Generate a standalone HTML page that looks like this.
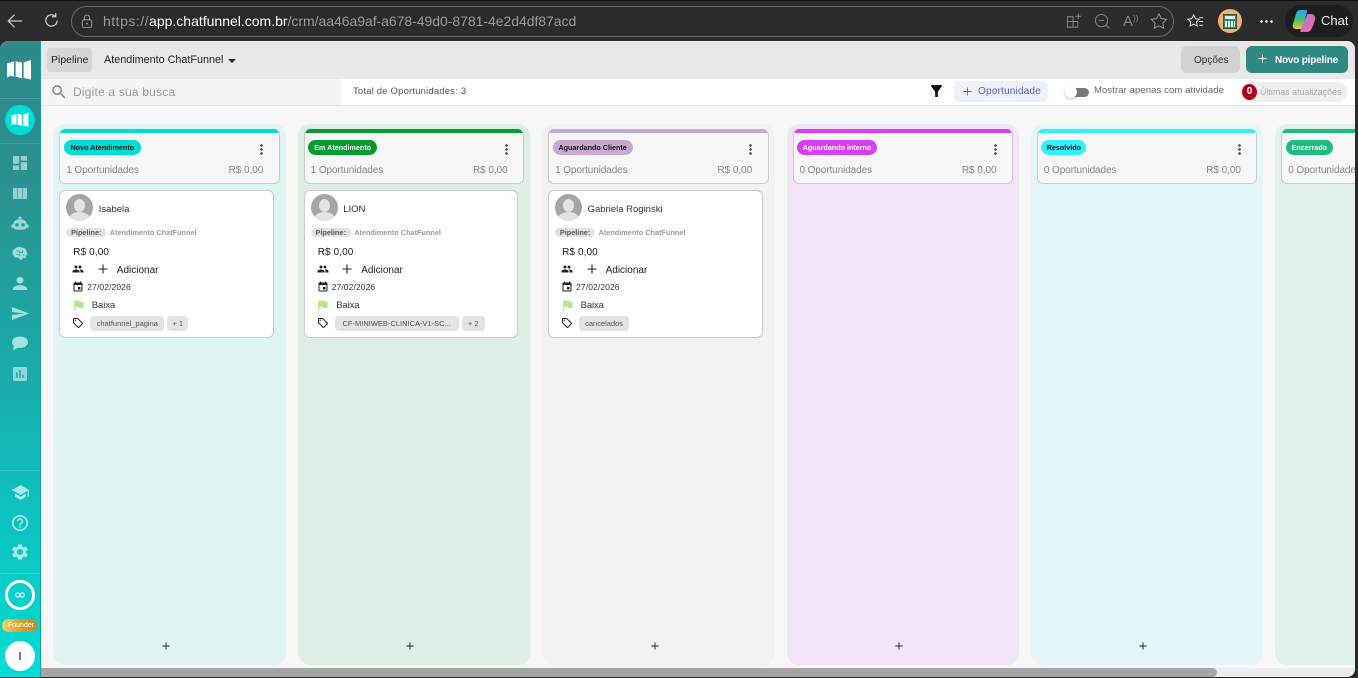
<!DOCTYPE html>
<html lang="pt-BR"><head><meta charset="utf-8"><title>Pipeline</title>
<style>
*{box-sizing:border-box}
html,body{margin:0;padding:0;width:1358px;height:678px;overflow:hidden;background:#2b2b2b;font-family:"Liberation Sans",sans-serif;color:#222}
.a{position:absolute}
.t{position:absolute;white-space:nowrap;line-height:1}
svg{position:absolute;display:block}
#page{position:absolute;left:0;top:41px;width:1355px;height:636px;background:#f6f6f6;border-radius:8px 8px 8px 0;overflow:hidden}
.col{position:absolute;top:83px;width:232.500px;height:541px;border-radius:12px}
.hd{position:absolute;left:6px;top:5px;width:220.500px;height:55px;background:#f6f6f6;border:1px solid #ccc;border-top:0;border-radius:6px;overflow:hidden}
.bar{position:absolute;left:0;top:0;right:0;height:4px}
.pill{position:absolute;left:3.500px;top:11px;height:15px;border-radius:7.500px;font-size:7.200px;font-weight:bold;line-height:15px;text-align:center;white-space:nowrap;color:#111}
.opp{position:absolute;left:6px;top:36px;font-size:10px;line-height:12px;color:#888;white-space:nowrap;letter-spacing:-.1px}
.val{position:absolute;right:15.500px;top:36px;font-size:10px;line-height:12px;color:#888;white-space:nowrap;letter-spacing:-.05px}
.dots{position:absolute;left:200px;top:15px;width:3px;height:11px;background:radial-gradient(circle at 1.500px 1.500px,#666 1.300px,transparent 1.500px) 0 0/3px 4px}
.card{position:absolute;left:6px;top:66px;width:214.600px;height:148px;background:#fff;border:1px solid #ccc;border-radius:6px}
.av{position:absolute;left:6px;top:3px;width:27px;height:27px;border-radius:50%;background:#a5a5a5;overflow:hidden}
.av:before{content:"";position:absolute;left:8px;top:5px;width:11px;height:13px;border-radius:50%;background:#e3e3e3}
.av:after{content:"";position:absolute;left:3px;top:18px;width:21px;height:14px;border-radius:50%;background:#e3e3e3}
.name{position:absolute;left:38.500px;top:13px;font-size:9.500px;line-height:12px;color:#333;white-space:nowrap}
.pl{position:absolute;left:6px;top:37px;width:40px;height:9px;border-radius:5px;background:#e3e3e3;font-size:7.300px;line-height:9px;text-align:center;color:#555;font-weight:bold}
.pn{position:absolute;left:49.500px;top:37px;font-size:7.300px;line-height:9px;color:#999;white-space:nowrap;font-weight:bold}
.money{position:absolute;left:13px;top:56px;font-size:10px;line-height:12px;color:#222;letter-spacing:.1px;white-space:nowrap}
.add{position:absolute;left:56.500px;top:74px;font-size:10px;line-height:12px;color:#222}
.dt{position:absolute;left:27px;top:91px;font-size:8.500px;line-height:10px;color:#333;letter-spacing:.1px}
.lo{position:absolute;left:31.500px;top:109px;font-size:9.500px;line-height:12px;color:#333;letter-spacing:-.1px}
.chip{position:absolute;top:125px;height:15px;border-radius:4px;background:#e4e4e4;font-size:7.500px;line-height:15px;text-align:center;color:#555;white-space:nowrap;overflow:hidden}
.pls{position:absolute;left:108.500px;top:518px}
</style></head><body>
<svg width="0" height="0" style="position:absolute"><defs>
<symbol id="map" viewBox="0 0 24 20"><path d="M0 3.500 7 1.300V16.800L3.500 15.800 0 17.500ZM8.600 1.200 15 2.600V18.200L8.600 16.700ZM16.600 2.400 24 0V19.500L16.600 18Z" fill="currentColor"/></symbol>
<symbol id="people" viewBox="0 0 24 24"><path d="M16 11c1.660 0 2.990-1.340 2.990-3S17.660 5 16 5c-1.660 0-3 1.340-3 3s1.340 3 3 3zm-8 0c1.660 0 2.990-1.340 2.990-3S9.660 5 8 5C6.340 5 5 6.340 5 8s1.340 3 3 3zm0 2c-2.330 0-7 1.170-7 3.500V19h14v-2.500c0-2.330-4.670-3.500-7-3.500zm8 0c-.29 0-.62.02-.97.05 1.160.84 1.970 1.970 1.970 3.450V19h6v-2.500c0-2.330-4.670-3.500-7-3.500z" fill="#222"/></symbol>
<symbol id="event" viewBox="0 0 24 24"><path d="M17 12h-5v5h5v-5zM16 1v2H8V1H6v2H5c-1.110 0-1.990.9-1.990 2L3 19c0 1.100.89 2 2 2h14c1.100 0 2-.9 2-2V5c0-1.100-.9-2-2-2h-1V1h-2zm3 18H5V8h14v11z" fill="#222"/></symbol>
<symbol id="flag" viewBox="0 0 24 24"><path d="M14.400 6L14 4H5v17h2v-7h5.600l.4 2h7V6z" fill="#b3e88c"/></symbol>
<symbol id="tag" viewBox="0 0 24 24"><path d="M21.410 11.580l-9-9C12.050 2.220 11.550 2 11 2H4c-1.100 0-2 .9-2 2v7c0 .55.22 1.050.59 1.420l9 9c.36.36.86.58 1.410.58s1.050-.22 1.410-.59l7-7c.37-.36.59-.86.59-1.410s-.23-1.060-.59-1.420zM13 20.010L4 11V4h7v-.01l9 9-7 7.020z" fill="#222"/><circle cx="6.500" cy="6.500" r="1.500" fill="#222"/></symbol>
<symbol id="plus" viewBox="0 0 10 10"><path d="M5 .5v9M.5 5h9" stroke="#222" stroke-width="1.100" fill="none"/></symbol>
</defs></svg>

<!-- browser chrome -->
<div class="a" style="left:0;top:0;width:1358px;height:1px;background:#111"></div>
<svg style="left:6px;top:12px" width="18" height="18" viewBox="0 0 20 20"><path d="M18 10H2.500M9.500 3 2.500 10l7 7" stroke="#ccc" stroke-width="1.300" fill="none"/></svg>
<svg style="left:43px;top:12px" width="17" height="17" viewBox="0 0 18 18"><path d="M15 9a6 6 0 1 1-2-4.500M13.500 1v4h-4" stroke="#ccc" stroke-width="1.300" fill="none"/></svg>
<div class="a" style="left:71px;top:6px;width:1103px;height:31px;border:1px solid #666;border-radius:15.500px"></div>
<svg style="left:81px;top:14px" width="12" height="15" viewBox="0 0 14 17"><path d="M4 7V4a3 3 0 0 1 6 0v3" stroke="#aaa" fill="none"/><rect x="1.500" y="6.500" width="11" height="9" rx="2" stroke="#aaa" fill="none"/><circle cx="7" cy="11" r="1" fill="#aaa"/></svg>
<div class="t" style="left:103px;top:14px;font-size:14px;color:#9a9a9a"><span style="letter-spacing:.5px">https://</span><span style="color:#fff">app.chatfunnel.com.br</span><span style="letter-spacing:-.04px">/crm/aa46a9af-a678-49d0-8781-4e2d4df87acd</span></div>
<svg style="left:1066px;top:12px" width="17" height="18" viewBox="0 0 18 18"><path d="M1.500 4.500h6v5h5v6h-11zM1.500 9.500h6v6M13 1v6M10 4h6" stroke="#888" fill="none"/></svg>
<svg style="left:1094px;top:13px" width="17" height="17" viewBox="0 0 18 18"><circle cx="8" cy="8" r="6.500" stroke="#888" fill="none"/><path d="M5.500 8h5M12.500 12.500l4 4" stroke="#888" fill="none"/></svg>
<div class="t" style="left:1123px;top:14px;font-size:15px;color:#888">A<span style="font-size:8px;position:relative;top:-5px">))</span></div>
<svg style="left:1150px;top:12px" width="18" height="18" viewBox="0 0 19 19"><path d="M9.500 2 12 7l5.500.8-4 3.900 1 5.500-5-2.600-5 2.600 1-5.500-4-3.900L7 7z" stroke="#999" fill="none"/></svg>
<svg style="left:1186px;top:12px" width="19" height="19" viewBox="0 0 20 20"><path d="M8 3 10 7l4 .6-3 2.900.8 4.300L8 12.800 4.300 14.800 5 10.500 2 7.600 6 7z" stroke="#eee" fill="none"/><path d="M14 6h4M14 10h4M14 14h4" stroke="#eee"/></svg>
<div class="a" style="left:1218px;top:9px;width:24px;height:24px;border-radius:50%;background:#f5b06b"></div>
<div class="a" style="left:1223px;top:14px;width:14px;height:15px;background:#2e8b70;border:1px solid #1c5c4a"></div>
<div class="a" style="left:1225px;top:16px;width:10px;height:3px;background:#dff5ee"></div>
<div class="a" style="left:1225px;top:21px;width:10px;height:6px;background:repeating-linear-gradient(90deg,#e8fff6 0 2px,#2e8b70 2px 3px)"></div>
<div class="a" style="left:1260px;top:20px;width:14px;height:3px;background:radial-gradient(circle at 1.500px 1.500px,#ddd 1.200px,transparent 1.500px) 0 0/5px 3px"></div>
<div class="a" style="left:1285px;top:5px;width:68px;height:32px;border-radius:16px;background:#1d1d1d"></div>
<svg style="left:1292px;top:9px" width="24" height="24" viewBox="0 0 24 24"><defs><linearGradient id="g1" x1="0" y1="0" x2="0" y2="1"><stop offset="0" stop-color="#2aa3f0"/><stop offset=".5" stop-color="#36c46e"/><stop offset="1" stop-color="#f5c32c"/></linearGradient><linearGradient id="g2" x1="0" y1="0" x2="1" y2="1"><stop offset="0" stop-color="#b06cf0"/><stop offset="1" stop-color="#f0708a"/></linearGradient></defs><path d="M8 1h6c1 0 1.500 1 1 2L11 17c-.5 2-1.500 3-3 3H4c-3 0-4-3-3-5L4 5c.7-2.500 2-4 4-4z" fill="url(#g1)"/><path d="M16 5h3c3 0 5 3 4 6l-3 8c-.7 2-2.500 4-4.500 4H9c-1 0-1-1-.5-2L15 6c.2-.6.5-1 1-1z" fill="url(#g2)"/></svg>
<div class="t" style="left:1321px;top:14px;font-size:13px;color:#eee">Chat</div>

<div id="page">
<!-- sidebar -->
<div class="a" style="left:0;top:0;width:41px;height:636px;background:linear-gradient(180deg,#2f8a8a 0%,#2b9090 20%,#1ba9a9 50%,#00dcd6 100%);border-right:1px solid #12a5a0"></div>
<svg style="left:7px;top:19px;color:#fff" width="24" height="20"><use href="#map"/></svg>
<div class="a" style="left:0;top:57px;width:40px;height:1px;background:#ffffff26"></div>
<div class="a" style="left:5px;top:64px;width:30px;height:30px;border-radius:50%;background:#00dcd6"></div>
<svg style="left:11px;top:72px;color:#fff" width="18" height="14"><use href="#map"/></svg>
<div class="a" style="left:0;top:102px;width:40px;height:1px;background:#ffffff1f"></div>
<svg style="left:13px;top:115px" width="14" height="14" viewBox="3 3 18 18" fill="#93cfcc"><path d="M3 13h8V3H3v10zm0 8h8v-6H3v6zm10 0h8V11h-8v10zm0-18v6h8V3h-8z"/></svg>
<svg style="left:13px;top:147px" width="14" height="11" viewBox="0 0 14 11" fill="#93d2cf"><path d="M0 0h4.300v11H0zM4.900 0h4.200v11H4.900zM9.700 0H14v11H9.700z"/></svg>
<svg style="left:11px;top:175px" width="18" height="16" viewBox="0 0 18 18" fill="#9ad8d5" preserveAspectRatio="none"><circle cx="9" cy="2" r="1.500"/><path d="M9 3.500c4 0 6.500 2.500 6.500 5.500l1.500.5c1 .5 1 3 0 3.500l-1.500.5c-1 1.500-2 2-3.500 2H6c-1.500 0-2.500-.5-3.500-2L1 13c-1-.5-1-3 0-3.500l1.500-.5c0-3 2.500-5.500 6.500-5.500z"/><circle cx="6" cy="10" r="1.800" fill="#279a9a"/><circle cx="12" cy="10" r="1.800" fill="#279a9a"/></svg>
<svg style="left:12px;top:205px" width="16" height="15" viewBox="0 0 18 18" preserveAspectRatio="none"><path d="M3 3.500C5 1 9 .5 11 2c3 0 5.500 2 5.500 5 1 2 .5 4-1 5v3l-3.500-1-.5 2.500H9L7.500 14c-3 .5-5-.5-5.500-2.500C0 10 0 5.500 3 3.500z" fill="#9ddbd8"/><path d="M5 6h3l1 2h3M5 10h3l1 2M12 5v3M12 11h2" stroke="#22a0a0" fill="none"/></svg>
<svg style="left:13px;top:236px" width="14" height="13" viewBox="4 4 16 16" preserveAspectRatio="none" fill="#a3e0dd"><path d="M12 12c2.210 0 4-1.790 4-4s-1.790-4-4-4-4 1.790-4 4 1.790 4 4 4zm0 2c-2.670 0-8 1.340-8 4v2h16v-2c0-2.660-5.330-4-8-4z"/></svg>
<svg style="left:12px;top:266px" width="17" height="13" viewBox="2 3 21 18" preserveAspectRatio="none" fill="#a3e0dd"><path d="M2.010 21L23 12 2.010 3 2 10l15 2-15 2z"/></svg>
<svg style="left:12px;top:295px" width="16" height="15" viewBox="0 0 16 17" preserveAspectRatio="none" fill="#a3e2df"><ellipse cx="8" cy="7" rx="8" ry="6.500"/><path d="M2 10 1 16l6-3z"/></svg>
<svg style="left:13px;top:326px" width="14" height="14" viewBox="3 3 18 18" fill="#8fd8d5"><path d="M19 3H5c-1.100 0-2 .9-2 2v14c0 1.100.9 2 2 2h14c1.100 0 2-.9 2-2V5c0-1.100-.9-2-2-2zM9 17H7v-7h2v7zm4 0h-2V7h2v10zm4 0h-2v-4h2v4z"/></svg>
<div class="a" style="left:0;top:429px;width:40px;height:1px;background:#ffffff1f"></div>
<svg style="left:12px;top:444px" width="17" height="15" viewBox="1 3 22 18" preserveAspectRatio="none" fill="#a8ece8"><path d="M5 13.180v4L12 21l7-3.820v-4L12 17l-7-3.820zM12 3L1 9l11 6 9-4.910V17h2V9L12 3z"/></svg>
<svg style="left:12px;top:474px" width="16" height="16" viewBox="2 2 20 20" fill="#a8ece8"><path d="M11 18h2v-2h-2v2zm1-16C6.480 2 2 6.480 2 12s4.480 10 10 10 10-4.480 10-10S17.520 2 12 2zm0 18c-4.410 0-8-3.590-8-8s3.590-8 8-8 8 3.590 8 8-3.590 8-8 8zm0-14c-2.210 0-4 1.790-4 4h2c0-1.100.9-2 2-2s2 .9 2 2c0 2-3 1.750-3 5h2c0-2.250 3-2.500 3-5 0-2.210-1.790-4-4-4z"/></svg>
<svg style="left:12px;top:503px" width="16" height="16" viewBox="2.500 2 19 20" preserveAspectRatio="none" fill="#a8ece8"><path d="M19.140 12.940c.04-.3.06-.61.06-.94 0-.32-.02-.64-.07-.94l2.030-1.580c.18-.14.23-.41.12-.61l-1.920-3.320c-.12-.22-.37-.29-.59-.22l-2.390.96c-.5-.38-1.030-.7-1.620-.94l-.36-2.540c-.04-.24-.24-.41-.48-.41h-3.840c-.24 0-.43.17-.47.41l-.36 2.540c-.59.24-1.130.57-1.620.94l-2.390-.96c-.22-.08-.47 0-.59.22L2.740 8.870c-.12.21-.08.47.12.61l2.030 1.580c-.05.3-.09.63-.09.94s.02.64.07.94l-2.030 1.580c-.18.14-.23.41-.12.61l1.920 3.320c.12.22.37.29.59.22l2.390-.96c.5.38 1.030.7 1.620.94l.36 2.540c.05.24.24.41.48.41h3.840c.24 0 .44-.17.47-.41l.36-2.540c.59-.24 1.130-.56 1.620-.94l2.390.96c.22.08.47 0 .59-.22l1.920-3.320c.12-.22.07-.47-.12-.61l-2.010-1.580zM12 15.600c-1.980 0-3.600-1.620-3.600-3.600s1.620-3.600 3.600-3.600 3.600 1.620 3.600 3.600-1.620 3.600-3.600 3.600z"/></svg>
<div class="a" style="left:0;top:532px;width:40px;height:1px;background:#ffffff2e"></div>
<div class="a" style="left:5px;top:539px;width:30px;height:30px;border-radius:50%;border:3px solid #fff"></div>
<svg style="left:15px;top:551px" width="10" height="6" viewBox="0 0 10 6"><circle cx="2.800" cy="3" r="2.100" stroke="#fff" stroke-width="1.100" fill="none"/><circle cx="7.200" cy="3" r="2.100" stroke="#fff" stroke-width="1.100" fill="none"/></svg>
<div class="a" style="left:2px;top:578px;width:35px;height:13px;border-radius:7px;background:linear-gradient(90deg,#f3d36b,#d9a52c 50%,#c48a20)"></div>
<div class="t" style="left:8px;top:581px;font-size:7px;color:#fff">Founder</div>
<div class="a" style="left:5px;top:600px;width:30px;height:30px;border-radius:50%;background:#fff"></div>
<div class="a" style="left:19px;top:611px;width:2px;height:8px;background:#808080"></div>

<!-- top bar -->
<div class="a" style="left:41px;top:0;width:1317px;height:38px;background:#e8e8e8"></div>
<div class="a" style="left:47px;top:7px;width:45px;height:24px;background:#d6d6d6;border-radius:3px"></div>
<div class="t" style="left:51px;top:14px;font-size:10.500px;color:#222">Pipeline</div>
<div class="t" style="left:104px;top:13.500px;font-size:10.800px;color:#222">Atendimento ChatFunnel</div>
<div class="a" style="left:228px;top:18px;border:4px solid transparent;border-top:4px solid #222;border-bottom:0"></div>
<div class="a" style="left:1181px;top:5px;width:59px;height:27px;background:#d2d2d2;border-radius:6px"></div>
<div class="t" style="left:1194px;top:15px;font-size:10px;color:#333">Opções</div>
<div class="a" style="left:1246px;top:5px;width:102px;height:27px;background:#2f8a84;border-radius:6px"></div>
<svg style="left:1258px;top:13px" width="9" height="9" viewBox="0 0 10 10"><path d="M5 .5v9M.5 5h9" stroke="#fff" stroke-width="1.200"/></svg>
<div class="t" style="left:1275px;top:15px;font-size:10px;color:#fff;font-weight:bold;letter-spacing:-.2px">Novo pipeline</div>

<!-- filter row -->
<div class="a" style="left:41px;top:38px;width:1317px;height:27px;background:#fff;border-bottom:1px solid #e6e6e6"></div>
<div class="a" style="left:41px;top:38px;width:300px;height:26px;background:#f5f5f5"></div>
<svg style="left:50px;top:42px" width="18" height="18" viewBox="0 0 24 24" fill="#888"><path d="M15.500 14h-.79l-.28-.27C15.410 12.590 16 11.110 16 9.500 16 5.910 13.090 3 9.500 3S3 5.910 3 9.500 5.910 16 9.500 16c1.610 0 3.090-.59 4.230-1.570l.27.28v.79l5 4.990L20.490 19l-4.990-5zm-6 0C7.010 14 5 11.990 5 9.500S7.010 5 9.500 5 14 7.010 14 9.500 11.990 14 9.500 14z"/></svg>
<div class="t" style="left:73px;top:45px;font-size:12px;color:#999;letter-spacing:.2px">Digite a sua busca</div>
<div class="t" style="left:353px;top:46px;font-size:9.500px;color:#555;letter-spacing:.18px">Total de Oportunidades: 3</div>
<svg style="left:931px;top:44px" width="11" height="12" viewBox="4 4 16 16" preserveAspectRatio="none" fill="#111"><path d="M4.250 5.610C6.270 8.200 10 13 10 13v6c0 .55.45 1 1 1h2c.55 0 1-.45 1-1v-6s3.720-4.800 5.740-7.390C20.250 4.950 19.780 4 18.950 4H5.040c-.83 0-1.300.95-.79 1.610z"/></svg>
<div class="a" style="left:954px;top:40px;width:94px;height:21px;background:#eef0fb;border-radius:5px"></div>
<svg style="left:963px;top:46px" width="9" height="9" viewBox="0 0 10 10"><path d="M5 .5v9M.5 5h9" stroke="#5c62c4" stroke-width="1"/></svg>
<div class="t" style="left:978px;top:46px;font-size:10.200px;color:#5c62c4;letter-spacing:.1px">Oportunidade</div>
<div class="a" style="left:1068px;top:47px;width:21px;height:9px;border-radius:5px;background:#7a7a7a"></div>
<div class="a" style="left:1065px;top:45px;width:12px;height:12px;border-radius:50%;background:#fff;box-shadow:0 1px 2px #0004"></div>
<div class="t" style="left:1094px;top:45px;font-size:9.500px;color:#666;letter-spacing:.1px">Mostrar apenas com atividade</div>
<div class="a" style="left:1240px;top:41px;width:108px;height:20px;border-radius:10px;background:#f0f0f0"></div>
<div class="a" style="left:1242px;top:43px;width:15px;height:16px;border-radius:50%;background:#b00020;color:#fff;font-size:10px;font-weight:bold;line-height:16px;text-align:center">0</div>
<div class="t" style="left:1260px;top:47px;font-size:8.900px;color:#aaa">Últimas atualizações</div>

<!-- columns -->
<div class="col" style="left:53.300px;background:#dff5f3">
<div class="hd"><div class="bar" style="background:#00dcd6"></div><div class="pill" style="background:#00dcd6;width:77px">Novo Atendimento</div><div class="dots"></div><div class="opp">1 Oportunidades</div><div class="val">R$ 0,00</div></div>
<div class="card"><div class="av"></div><div class="name">Isabela</div><div class="pl">Pipeline:</div><div class="pn">Atendimento ChatFunnel</div><div class="money">R$ 0,00</div>
<svg style="left:12px;top:72px" width="12" height="12"><use href="#people"/></svg><svg style="left:37.500px;top:73px" width="10" height="10"><use href="#plus"/></svg><div class="add">Adicionar</div>
<svg style="left:12px;top:90px" width="12" height="12"><use href="#event"/></svg><div class="dt">27/02/2026</div>
<svg style="left:10.600px;top:106.500px" width="15" height="15"><use href="#flag"/></svg><div class="lo">Baixa</div>
<svg style="left:12px;top:126px" width="12" height="12"><use href="#tag"/></svg><div class="chip" style="left:30px;width:74px">chatfunnel_pagina</div><div class="chip" style="left:107px;width:21px">+ 1</div></div>
<svg class="pls" width="8" height="8"><use href="#plus"/></svg></div>

<div class="col" style="left:297.700px;background:#dfeee4">
<div class="hd"><div class="bar" style="background:#039c2f"></div><div class="pill" style="background:#039c2f;color:#fff;width:69px">Em Atendimento</div><div class="dots"></div><div class="opp">1 Oportunidades</div><div class="val">R$ 0,00</div></div>
<div class="card"><div class="av"></div><div class="name">LION</div><div class="pl">Pipeline:</div><div class="pn">Atendimento ChatFunnel</div><div class="money">R$ 0,00</div>
<svg style="left:12px;top:72px" width="12" height="12"><use href="#people"/></svg><svg style="left:37.500px;top:73px" width="10" height="10"><use href="#plus"/></svg><div class="add">Adicionar</div>
<svg style="left:12px;top:90px" width="12" height="12"><use href="#event"/></svg><div class="dt">27/02/2026</div>
<svg style="left:10.600px;top:106.500px" width="15" height="15"><use href="#flag"/></svg><div class="lo">Baixa</div>
<svg style="left:12px;top:126px" width="12" height="12"><use href="#tag"/></svg><div class="chip" style="left:30px;width:124px">CF-MINIWEB-CLINICA-V1-SC...</div><div class="chip" style="left:157px;width:23px">+ 2</div></div>
<svg class="pls" width="8" height="8"><use href="#plus"/></svg></div>

<div class="col" style="left:542.100px;background:#f1f0f3">
<div class="hd"><div class="bar" style="background:#c9a8d4"></div><div class="pill" style="background:#c9a8d4;width:80px">Aguardando Cliente</div><div class="dots"></div><div class="opp">1 Oportunidades</div><div class="val">R$ 0,00</div></div>
<div class="card"><div class="av"></div><div class="name">Gabriela Roginski</div><div class="pl">Pipeline:</div><div class="pn">Atendimento ChatFunnel</div><div class="money">R$ 0,00</div>
<svg style="left:12px;top:72px" width="12" height="12"><use href="#people"/></svg><svg style="left:37.500px;top:73px" width="10" height="10"><use href="#plus"/></svg><div class="add">Adicionar</div>
<svg style="left:12px;top:90px" width="12" height="12"><use href="#event"/></svg><div class="dt">27/02/2026</div>
<svg style="left:10.600px;top:106.500px" width="15" height="15"><use href="#flag"/></svg><div class="lo">Baixa</div>
<svg style="left:12px;top:126px" width="12" height="12"><use href="#tag"/></svg><div class="chip" style="left:30px;width:50px">cancelados</div></div>
<svg class="pls" width="8" height="8"><use href="#plus"/></svg></div>

<div class="col" style="left:786.500px;background:#f3e3f7">
<div class="hd"><div class="bar" style="background:#d63ff0"></div><div class="pill" style="background:#d63ff0;color:#fff;width:80px">Aguardando interno</div><div class="dots"></div><div class="opp">0 Oportunidades</div><div class="val">R$ 0,00</div></div>
<svg class="pls" width="8" height="8"><use href="#plus"/></svg></div>

<div class="col" style="left:1030.900px;background:#e2f5f9">
<div class="hd"><div class="bar" style="background:#33f0ff"></div><div class="pill" style="background:#33f0ff;width:45px">Resolvido</div><div class="dots"></div><div class="opp">0 Oportunidades</div><div class="val">R$ 0,00</div></div>
<svg class="pls" width="8" height="8"><use href="#plus"/></svg></div>

<div class="col" style="left:1275.300px;background:#e0f1e9">
<div class="hd"><div class="bar" style="background:#1dbb7c"></div><div class="pill" style="background:#1dbb7c;color:#fff;width:47px">Encerrado</div><div class="dots"></div><div class="opp">0 Oportunidades</div><div class="val">R$ 0,00</div></div>
</div>

<!-- scrollbar -->
<div class="a" style="left:41px;top:627px;width:1317px;height:9px;background:#ececec"></div>
<div class="a" style="left:41px;top:627px;width:1176px;height:9px;background:#a6a6a6;border-radius:0 5px 5px 0"></div>
</div>
</body></html>
